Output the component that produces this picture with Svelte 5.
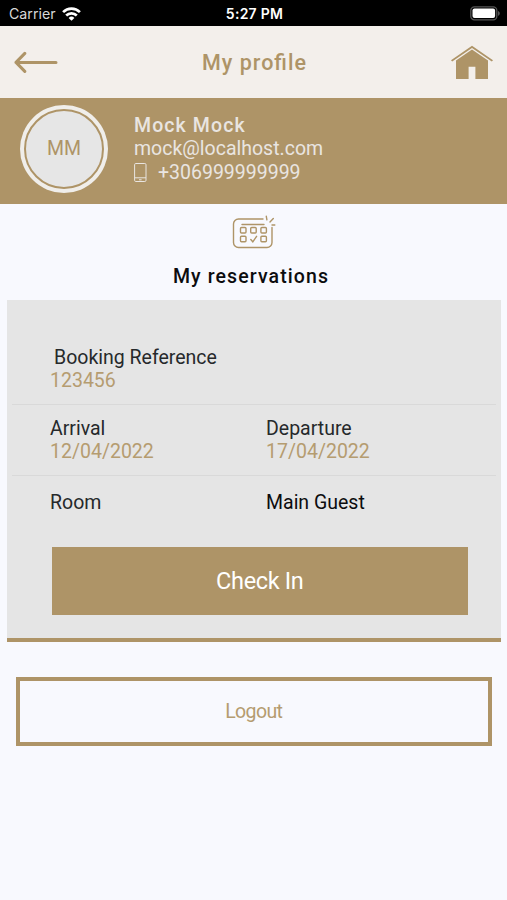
<script lang="ts">
	interface Guest {
		name: string;
		initials: string;
		email: string;
		phone: string;
	}

	interface Reservation {
		reference: string;
		arrival: string;
		departure: string;
	}

	const guest: Guest = {
		name: 'Mock Mock',
		initials: 'MM',
		email: 'mock@localhost.com',
		phone: '+306999999999'
	};

	const reservations: Reservation[] = [
		{ reference: '123456', arrival: '12/04/2022', departure: '17/04/2022' }
	];
</script>

<div class="screen">
	<div class="status-bar">
		<div class="carrier">
			<span>Carrier</span>
			<svg width="19" height="14" viewBox="0 0 19 14" fill="none" stroke="#fff" stroke-width="2.7">
				<path d="M1.1 5.1a12 12 0 0 1 16.8 0" />
				<path d="M4.2 8.5a7.6 7.6 0 0 1 10.6 0" />
				<path d="M9.5 13.8 6.6 10.9a4.1 4.1 0 0 1 5.8 0z" fill="#fff" stroke="none" />
			</svg>
		</div>
		<span class="time">5:27 PM</span>
		<svg class="battery" width="31" height="15" viewBox="0 0 31 15">
			<rect x="0.8" y="0.8" width="26" height="13" rx="3.6" fill="none" stroke="#555" stroke-width="1.3" />
			<rect x="2.5" y="2.5" width="22.6" height="9.6" rx="2" fill="#fff" />
			<path d="M28 5v4.8c2.4-.8 2.4-4 0-4.8z" fill="#555" />
		</svg>
	</div>

	<header class="top-bar">
		<button type="button" class="icon-button" aria-label="Back">
			<svg width="44" height="22" viewBox="0 0 44 22" fill="none" stroke="currentColor" stroke-width="3" stroke-linecap="round" stroke-linejoin="round">
				<path d="M42 11.4H2M10.800 2.400 2 11.400l8.800 9" />
			</svg>
		</button>
		<h1>My profile</h1>
		<button type="button" class="icon-button" aria-label="Home">
			<svg width="42" height="36" viewBox="0 0 42 36" fill="currentColor">
				<path d="M21 1.800 42 16.200 40.800 17.400 21 4 1.200 17.400 0 16.200z" />
				<path d="M21 5.6 37 16.4V35H24.400V22.800h-6.800V35H5V16.400z" />
			</svg>
		</button>
	</header>

	<section class="profile">
		<div class="avatar"><span>{guest.initials}</span></div>
		<div class="details">
			<div class="name">{guest.name}</div>
			<div class="email">{guest.email}</div>
			<div class="phone">
				<svg width="13" height="20" viewBox="0 0 13 20" fill="none" stroke="currentColor">
					<rect x="0.6" y="0.5" width="11.4" height="18" rx="1.2" />
					<path d="M.6 14.8h11.4M5 16.8h2.6" />
				</svg>
				<span>{guest.phone}</span>
			</div>
		</div>
	</section>

	<section class="heading">
		<svg width="44" height="34" viewBox="0 0 44 34" fill="none" stroke="currentColor" stroke-width="1.4" stroke-linecap="round">
			<path d="M31 4H6.500A5 5 0 0 0 1.500 9v18.500a5 5 0 0 0 5 5H35a5 5 0 0 0 5-5v-15" />
			<path d="M10 9.500h22M34.300 1.300l.6 3.500M41.300 3.500l-3.300 3.500M40 10h2.800" />
			<rect x="8.5" y="12.5" width="5.5" height="5.5" rx="1" />
			<rect x="18.7" y="12.5" width="5.5" height="5.5" rx="1" />
			<rect x="28.9" y="12.5" width="5.5" height="5.5" rx="1" />
			<rect x="8.5" y="21.3" width="5.5" height="5.5" rx="1" />
			<path d="m18.8 24.500 2 2.300 3.800-5.500" />
			<rect x="28.9" y="21.3" width="5.5" height="5.5" rx="1" />
		</svg>
		<h2>My reservations</h2>
	</section>

	{#each reservations as reservation}
		<article class="card">
			<div class="row reference">
				<div>
					<div class="label indent">Booking Reference</div>
					<div class="value">{reservation.reference}</div>
				</div>
			</div>
			<div class="row dates">
				<div>
					<div class="label">Arrival</div>
					<div class="value">{reservation.arrival}</div>
				</div>
				<div>
					<div class="label">Departure</div>
					<div class="value">{reservation.departure}</div>
				</div>
			</div>
			<div class="row room">
				<div class="label">Room</div>
				<div class="label guest">Main Guest</div>
			</div>
			<button type="button" class="check-in">Check In</button>
		</article>
	{/each}

	<button type="button" class="logout">Logout</button>
</div>

<style>
	:global(body) {
		background: #f8f9fe;
	}

	.screen {
		--gold: #ae9467;
		--light: #e9e5e1;
		box-sizing: border-box;
		display: flex;
		flex-direction: column;
		height: 900px;
		background: #f8f9fe;
		font-family: Roboto, sans-serif;
		font-size: 19.5px;
		line-height: 23.4px;
	}

	svg {
		display: block;
		flex: none;
	}

	h1,
	h2 {
		margin: 0;
	}

	button {
		font-family: inherit;
		cursor: pointer;
	}

	.status-bar {
		box-sizing: border-box;
		display: grid;
		grid-template-columns: 1fr auto 1fr;
		align-items: center;
		height: 25.5px;
		padding: 2px 6px 0 9px;
		background: #000;
		color: #fff;
		font-family: Inter, sans-serif;
		font-size: 14.2px;
		line-height: 18px;
	}

	.carrier {
		display: flex;
		align-items: center;
		gap: 6px;
		color: #d8d8d8;
	}

	.time {
		padding-right: 1px;
		font-size: 14px;
		font-weight: 600;
		letter-spacing: 0.25px;
	}

	.battery {
		justify-self: end;
	}

	.top-bar {
		box-sizing: border-box;
		display: flex;
		align-items: center;
		justify-content: space-between;
		height: 72.5px;
		padding: 1px 14px 0;
		background: #f3efeb;
		color: var(--gold);
	}

	.top-bar h1 {
		font-size: 21.5px;
		font-weight: 500;
		font-feature-settings: 'liga' 1;
		letter-spacing: 1px;
	}

	.icon-button {
		padding: 0;
		border: 0;
		background: none;
		color: inherit;
	}

	.profile {
		box-sizing: border-box;
		display: flex;
		align-items: flex-start;
		gap: 26px;
		height: 105.5px;
		padding: 6.5px 20px 0;
		background: var(--gold);
		color: var(--light);
	}

	.avatar {
		box-sizing: border-box;
		width: 88px;
		height: 88px;
		padding: 4px;
		border-radius: 50%;
		background: #f0eeea;
	}

	.avatar span {
		box-sizing: border-box;
		display: flex;
		align-items: center;
		justify-content: center;
		width: 80px;
		height: 80px;
		border: 2px solid var(--gold);
		border-radius: 50%;
		background: #e6e6e6;
		color: var(--gold);
	}

	.details {
		padding-top: 9.5px;
	}

	.name {
		font-weight: 500;
		letter-spacing: 1.1px;
	}

	.phone {
		display: flex;
		align-items: center;
		gap: 11px;
	}

	.heading {
		display: flex;
		flex-direction: column;
		align-items: center;
		gap: 16px;
		height: 85.5px;
		padding-top: 11px;
		color: var(--gold);
	}

	.heading h2 {
		padding-right: 5px;
		color: #0c0c0e;
		font-size: 19.5px;
		font-weight: 500;
		letter-spacing: 1.1px;
	}

	.card {
		box-sizing: border-box;
		display: flex;
		flex-direction: column;
		height: 342px;
		margin: 0 6px 0 7px;
		padding: 0 5px;
		border-bottom: 4px solid var(--gold);
		background: #e5e5e5;
	}

	.row {
		box-sizing: border-box;
		display: grid;
		grid-template-columns: 216px 1fr;
		align-content: start;
		padding-left: 38px;
	}

	.reference {
		height: 105px;
		padding-top: 46px;
		border-bottom: 1px solid #d9d9d9;
	}

	.dates {
		height: 71px;
		padding-top: 11.5px;
		border-bottom: 1px solid #d9d9d9;
	}

	.room {
		height: 70.5px;
		padding-top: 15px;
	}

	.label {
		color: #26292b;
	}

	.indent {
		padding-left: 4px;
	}

	.guest {
		color: #0c0c0e;
	}

	.value {
		color: #b59c70;
	}

	.check-in {
		height: 68.5px;
		margin: 0 28.5px 0 40px;
		padding: 0;
		border: 0;
		background: var(--gold);
		color: #fff;
		font-size: 23.5px;
		letter-spacing: -0.35px;
	}

	.logout {
		box-sizing: border-box;
		height: 68.5px;
		margin: 35px 15px 0 15.5px;
		padding: 0;
		border: 4px solid var(--gold);
		background: none;
		color: #b59c70;
		font-size: 19.5px;
		letter-spacing: -0.6px;
	}
</style>
